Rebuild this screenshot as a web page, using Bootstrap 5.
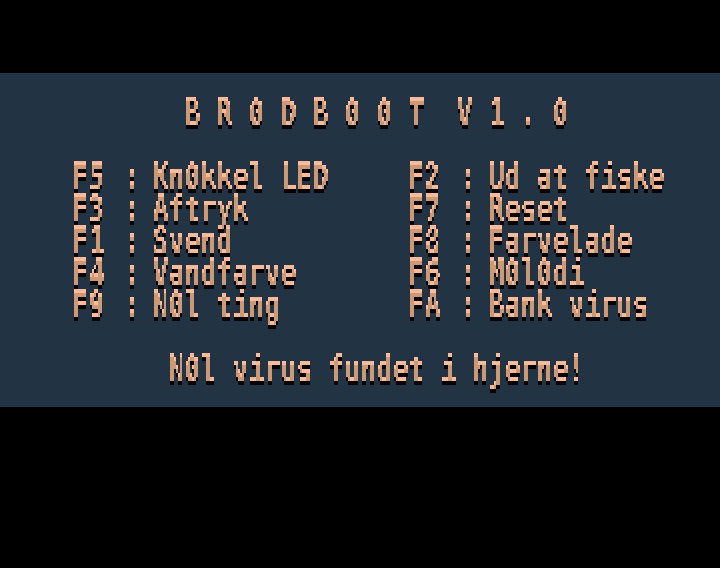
<!DOCTYPE html>
<html lang="da">
<head>
<meta charset="utf-8">
<title>BR0DB00T V1.0</title>
<meta name="viewport" content="width=device-width, initial-scale=1">
<link href="https://cdn.jsdelivr.net/npm/bootstrap@5.3.0/dist/css/bootstrap.min.css" rel="stylesheet">
<style>
  body { background: #000; padding-top: 73px; }
  .boot-panel { height: 334px; background: #223344; }
  .boot-screen { height: 334px; filter: url(#bitmap); }
  /* tall console cells: 16px by 24px, stretched to 32px */
  .boot-text {
    padding-top: 17px;
    padding-left: 1.3px;
    font: bold 26px/24px "DejaVu Sans Mono", monospace;
    letter-spacing: .348px;
    color: #fff;
    transform: translateY(.9px) scaleY(1.33333);
    transform-origin: 0 0;
  }
  .boot-title { font: inherit; white-space: pre; padding-left: 184px; margin-bottom: 24px; }
  .boot-menu { padding-left: 72px; margin-bottom: 24px; }
  .boot-keys { width: 336px; flex: none; }
  .boot-sep { margin-left: 3px; margin-right: -3px; }
  .boot-status { padding-left: 168px; }
</style>
<script src="https://cdn.jsdelivr.net/npm/bootstrap@5.3.0/dist/js/bootstrap.bundle.min.js"></script>
</head>
<body class="overflow-hidden">
<main class="boot-panel">
  <div class="boot-screen">
    <div class="boot-text">
      <h1 class="boot-title">B R 0 D B 0 0 T  V 1 . 0</h1>
      <div class="boot-menu d-flex">
        <ul class="boot-keys list-unstyled mb-0">
          <li>F5 <span class="boot-sep">:</span> Kn0kkel LED</li>
          <li>F3 <span class="boot-sep">:</span> Aftryk</li>
          <li>F1 <span class="boot-sep">:</span> Svend</li>
          <li>F4 <span class="boot-sep">:</span> Vandfarve</li>
          <li>F9 <span class="boot-sep">:</span> N0l ting</li>
        </ul>
        <ul class="boot-keys list-unstyled mb-0">
          <li>F2 <span class="boot-sep">:</span> Ud at fiske</li>
          <li>F7 <span class="boot-sep">:</span> Reset</li>
          <li>F8 <span class="boot-sep">:</span> Farvelade</li>
          <li>F6 <span class="boot-sep">:</span> M0l0di</li>
          <li>FA <span class="boot-sep">:</span> Bank virus</li>
        </ul>
      </div>
      <p class="boot-status mb-0">N0l virus fundet i hjerne!</p>
    </div>
  </div>
</main>
<svg width="0" height="0" class="d-block" aria-hidden="true">
  <!-- samples the text on a 2x4 grid, then lights upper edges and drops a black edge -->
  <filter id="bitmap" filterUnits="userSpaceOnUse" primitiveUnits="userSpaceOnUse" x="0" y="0" width="720" height="334" color-interpolation-filters="sRGB">
    <feFlood x="1" y="2" width="1" height="1" flood-color="#fff" result="dot"/>
    <feMerge x="0" y="0" width="2" height="4"><feMergeNode in="dot"/></feMerge>
    <feTile x="0" y="0" width="720" height="334" result="grid"/>
    <feComponentTransfer in="SourceGraphic" result="hard"><feFuncA type="discrete" tableValues="0 0 0 1 1 1 1"/></feComponentTransfer>
    <feComposite in="hard" in2="grid" operator="in" result="s"/>
    <feOffset in="s" dx="-1" dy="0" result="s1"/>
    <feMerge result="w"><feMergeNode in="s"/><feMergeNode in="s1"/></feMerge>
    <feOffset in="w" dx="0" dy="-1" result="w1"/>
    <feMerge result="h2"><feMergeNode in="w"/><feMergeNode in="w1"/></feMerge>
    <feOffset in="h2" dx="0" dy="-1" result="lo"/>
    <feOffset in="h2" dx="0" dy="1" result="hi"/>
    <feMerge result="shape"><feMergeNode in="lo"/><feMergeNode in="hi"/></feMerge>
    <feOffset in="shape" dx="0" dy="4" result="down"/>
    <feFlood flood-color="#ffbb99"/><feComposite in2="shape" operator="in" result="light"/>
    <feComposite in="shape" in2="down" operator="in" result="inner"/>
    <feFlood flood-color="#cc9977"/><feComposite in2="inner" operator="in" result="mid"/>
    <feFlood flood-color="#000"/><feComposite in2="down" operator="in" result="dark"/>
    <feMerge><feMergeNode in="dark"/><feMergeNode in="light"/><feMergeNode in="mid"/></feMerge>
  </filter>
</svg>
</body>
</html>
